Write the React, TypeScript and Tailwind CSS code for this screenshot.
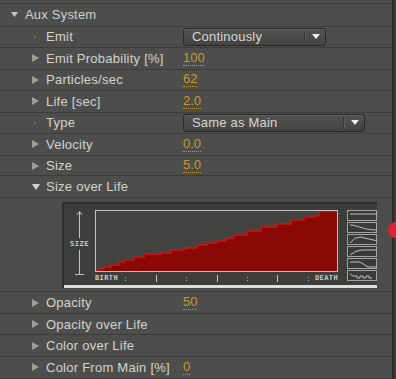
import * as React from 'react';

type Marker = 'closed' | 'open' | 'dot';

interface RowProps {
  label: string;
  marker: Marker;
  h: string;
  value?: string;
  select?: { text: string; width: string };
}

const font = { fontFamily: '"Liberation Sans", Arial, sans-serif' };

function Arrow({ marker }: { marker: Marker }) {
  if (marker === 'dot') {
    return <span className="ml-[34px] mr-[10px] h-[2px] w-[2px] bg-[#6c6d6a]" />;
  }
  if (marker === 'open') {
    return (
      <svg className="ml-[32px] mr-[6px]" width="8" height="6" viewBox="0 0 8 6">
        <path d="M0 0H8L4 6Z" fill="#d2d3cf" />
      </svg>
    );
  }
  return (
    <svg className="ml-[32px] mr-[7px]" width="7" height="8" viewBox="0 0 7 8">
      <path d="M0 0L7 4L0 8Z" fill="#9d9e9a" />
    </svg>
  );
}

function Select({ text, width }: { text: string; width: string }) {
  return (
    <div
      className={`flex h-[18px] items-center rounded-[3px] border border-[#282927] bg-linear-to-b from-[#525351] to-[#434442] shadow-[inset_0_1px_0_#5f605c] ${width}`}
    >
      <span className="flex-1 pl-[8px] text-[13px] leading-none tracking-[0.2px] text-[#d6d7d3]">{text}</span>
      <span className="h-[12px] w-[2px] border-l border-r border-l-[#353634] border-r-[#5c5d5a]" />
      <span className="flex w-[19px] justify-center">
        <svg width="8" height="5" viewBox="0 0 8 5">
          <path d="M0 0H8L4 5Z" fill="#f0f0f0" />
        </svg>
      </span>
    </div>
  );
}

function Row({ label, marker, h, value, select }: RowProps) {
  return (
    <div className={`flex items-center border-b border-[#3c3d3b] ${h}`}>
      <div className="flex w-[183px] items-center">
        <Arrow marker={marker} />
        <span className="text-[13px] leading-none tracking-[0.25px] text-[#d2d3cf]">{label}</span>
      </div>
      {value && (
        <span className="border-b border-dotted border-[#c6952a] text-[13px] leading-[14px] text-[#c9982c]">
          {value}
        </span>
      )}
      {select && <Select text={select.text} width={select.width} />}
    </div>
  );
}

// staircase for the size curve, plot-local coordinates (241 x 60 inner)
const steps: [number, number][] = [
  [0, 60], [3, 58], [8, 56], [15, 54], [23, 51], [28, 49], [38, 46], [48, 43],
  [65, 42], [75, 39], [88, 37], [101, 34], [111, 32], [121, 30], [130, 27],
  [138, 24], [151, 20], [165, 16], [181, 13], [195, 9], [208, 6], [218, 5], [223, 0],
];

function stairs() {
  let d = `M0 60`;
  steps.forEach(([x, y]) => {
    d += ` H${x} V${y}`;
  });
  return d + ' H241';
}

const presets = [
  'M2 3H30',
  'M2 2C10 2 14 7 30 7',
  'M2 8Q6 2 12 2L30 6',
  'M2 8Q8 3 14 3H30',
  'M2 3H12L20 8H30',
  'M2 3L5 5H9V7H12V5H15V7H18V5H21V7H24',
];

function SizeGraph() {
  return (
    <div className="ml-[62px] mt-[4px] flex h-[86px] w-[315px] flex-col overflow-hidden border-l-2 border-t-2 border-[#30312f] bg-[#3d3e3c]">
      <div className="flex h-[81px]">
        {/* axis */}
        <div className="flex w-[37px] flex-col items-center pt-[7px]">
          <svg width="7" height="27" viewBox="0 0 7 27">
            <path d="M3.5 1V27M1 4L3.5 0.5L6 4" stroke="#c4c5c1" strokeWidth="1" fill="none" />
          </svg>
          <span
            className="mt-[2px] text-[7px] font-bold leading-[8px] tracking-[0.5px] text-[#c9cac6]"
            style={{ fontFamily: '"DejaVu Sans Mono", monospace' }}
          >
            SIZE
          </span>
          <svg className="mt-[2px]" width="9" height="25" viewBox="0 0 9 25">
            <path d="M4.5 0V24.5M0 24.5H9" stroke="#c4c5c1" strokeWidth="1" fill="none" />
          </svg>
        </div>
        {/* plot */}
        <div className="flex w-[243px] flex-col pt-[6px]">
          <div className="h-[62px] w-[243px] border border-[#c2c3bf] bg-[#434442]">
            <svg width="241" height="60" viewBox="0 0 241 60">
              <path d={stairs() + ' V60 Z'} fill="#8a0906" />
              <path d={stairs()} stroke="#cc1610" strokeWidth="1.5" fill="none" />
            </svg>
          </div>
          <div
            className="relative mt-[2px] flex h-[9px] justify-between text-[7px] font-bold leading-[9px] tracking-[0.4px] text-[#c9cac6]"
            style={{ fontFamily: '"DejaVu Sans Mono", monospace' }}
          >
            <span>BIRTH</span>
            <span>DEATH</span>
            <svg className="absolute left-0 top-0" width="243" height="9" viewBox="0 0 243 9">
              {[30, 61, 91, 122, 152, 182, 213].map((x, i) =>
                i % 2 === 0 ? (
                  <g key={x} fill="#b5b6b2">
                    <rect x={x} y="3" width="1" height="1" />
                    <rect x={x} y="6" width="1" height="1" />
                  </g>
                ) : (
                  <rect key={x} x={x} y="1" width="1" height="7" fill="#c4c5c1" />
                )
              )}
            </svg>
          </div>
        </div>
        {/* curve presets */}
        <div className="ml-[9px] flex flex-col gap-[1px] pt-[6px]">
          {presets.map((d) => (
            <div key={d} className="h-[11px] w-[30px] border border-[#a3a4a0] bg-[#3a3b39]">
              <svg width="30" height="9" viewBox="0 0 30 9">
                <path d={d} stroke="#bfc0bc" strokeWidth="1" fill="none" />
              </svg>
            </div>
          ))}
        </div>
      </div>
      <div className="h-[3px] bg-[#dcddd9]" />
    </div>
  );
}

export default function App() {
  return (
    <div className="relative flex h-[379px] w-[396px] overflow-hidden bg-[#4d4e4b]" style={font}>
      <div className="flex w-[392px] flex-col">
        <div className="h-[4px] border-b border-[#3c3d3b]" />
        <div className="flex h-[23px] items-center border-b border-[#3c3d3b]">
          <svg className="ml-[11px] mr-[7px]" width="7" height="5" viewBox="0 0 7 5">
            <path d="M0 0H7L3.5 5Z" fill="#c5c6c2" />
          </svg>
          <span className="text-[13px] leading-none tracking-[0.2px] text-[#cfd0cc]">Aux System</span>
        </div>
        <Row h="h-[21px]" marker="dot" label="Emit" select={{ text: 'Continously', width: 'w-[143px]' }} />
        <Row h="h-[22px]" marker="closed" label="Emit Probability [%]" value="100" />
        <Row h="h-[21px]" marker="closed" label="Particles/sec" value="62" />
        <Row h="h-[22px]" marker="closed" label="Life [sec]" value="2.0" />
        <Row h="h-[21px]" marker="dot" label="Type" select={{ text: 'Same as Main', width: 'w-[182px]' }} />
        <Row h="h-[22px]" marker="closed" label="Velocity" value="0.0" />
        <Row h="h-[21px]" marker="closed" label="Size" value="5.0" />
        <Row h="h-[22px]" marker="open" label="Size over Life" />
        <div className="h-[94px] border-b border-[#3c3d3b]">
          <SizeGraph />
        </div>
        <Row h="h-[22px]" marker="closed" label="Opacity" value="50" />
        <Row h="h-[21px]" marker="closed" label="Opacity over Life" />
        <Row h="h-[22px]" marker="closed" label="Color over Life" />
        <Row h="h-[22px]" marker="closed" label="Color From Main [%]" value="0" />
      </div>
      {/* side strip */}
      <div className="w-[4px] border-l-2 border-[#2b2c2a] bg-[#3d3e3c]" />
      <div className="absolute left-[388px] top-[222px] h-[16px] w-[16px] rounded-full bg-[#dc2238]" />
    </div>
  );
}
